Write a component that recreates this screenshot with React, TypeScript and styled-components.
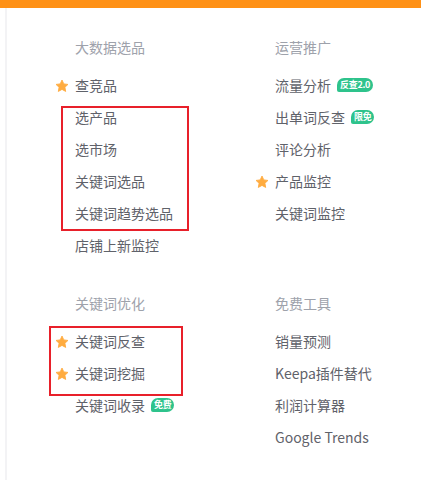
import React from 'react';
import styled, {createGlobalStyle} from 'styled-components';

const GlobalStyle = createGlobalStyle`
    html, body {
        margin: 0;
        padding: 0;
        background: #ffffff;
        font-family: "Noto Sans CJK SC", "Noto Sans", sans-serif;
    }
`;

const Page = styled.div`
    width: 421px;
    height: 480px;
    display: flex;
    flex-direction: column;
    overflow: hidden;
`;

const TopBar = styled.div`
    height: 8px;
    background: #ff9116;
    flex-shrink: 0;
`;

const Panel = styled.div`
    flex: 1;
    margin-left: 5px;
    border-left: 2px solid #f3f3f5;
    padding: 24px 0 0 48px;
`;

const Grid = styled.div`
    display: grid;
    grid-template-columns: 200px 200px;
    row-gap: 26px;
`;

const Section = styled.div`
    display: flex;
    flex-direction: column;
`;

const Title = styled.div`
    height: 32px;
    line-height: 30px;
    margin: 0 0 6px 20px;
    font-size: 14px;
    color: #9ea2ab;
`;

const Row = styled.div`
    display: grid;
    grid-template-columns: 20px auto;
    align-items: center;
    height: 32px;
`;

const StarCell = styled.span`
    display: flex;
    align-items: center;
`;

const Label = styled.span`
    display: flex;
    align-items: center;
    font-size: 14px;
    line-height: 30px;
    padding-bottom: 2px;
    color: #5f626a;
    white-space: nowrap;
`;

const Badge = styled.span`
    margin-left: 6px;
    height: 14px;
    padding: 0 3px;
    display: inline-flex;
    align-items: center;
    background: #2ec38c;
    color: #ffffff;
    font-size: 9px;
    font-weight: 700;
    line-height: 14px;
    border-radius: 7px 7px 7px 2px;
    letter-spacing: -0.3px;
`;

// red annotation frame drawn over a run of rows
const Highlight = styled.div<{$top: number; $left: number; $width: number; $bottom: number}>`
    position: relative;

    &::after {
        content: '';
        position: absolute;
        top: ${p => p.$top}px;
        left: ${p => p.$left}px;
        width: ${p => p.$width}px;
        bottom: ${p => p.$bottom}px;
        border: 2px solid #e8202a;
        pointer-events: none;
    }
`;

const Star = () => (
    <svg width="14" height="14" viewBox="0 0 24 24">
        <path
            d="M12 1.8l3.1 6.6 7.1.9-5.2 4.9 1.3 7.1L12 17.8l-6.3 3.5 1.3-7.1L1.8 9.3l7.1-.9z"
            fill="#ffac40"
            stroke="#ffac40"
            strokeWidth="1.5"
            strokeLinejoin="round"
        />
    </svg>
);

type ItemProps = {text: string; star?: boolean; badge?: string};

const Item = ({text, star, badge}: ItemProps) => (
    <Row>
        <StarCell>{star && <Star />}</StarCell>
        <Label>
            {text}
            {badge && <Badge>{badge}</Badge>}
        </Label>
    </Row>
);

const App = () => {
    return (
        <Page>
            <GlobalStyle />
            <TopBar />
            <Panel>
                <Grid>
                    <Section>
                        <Title>大数据选品</Title>
                        <Item text="查竞品" star />
                        <Highlight $top={4} $left={6} $width={124} $bottom={-1}>
                            <Item text="选产品" />
                            <Item text="选市场" />
                            <Item text="关键词选品" />
                            <Item text="关键词趋势选品" />
                        </Highlight>
                        <Item text="店铺上新监控" />
                    </Section>
                    <Section>
                        <Title>运营推广</Title>
                        <Item text="流量分析" badge="反查2.0" />
                        <Item text="出单词反查" badge="限免" />
                        <Item text="评论分析" />
                        <Item text="产品监控" star />
                        <Item text="关键词监控" />
                    </Section>
                    <Section>
                        <Title>关键词优化</Title>
                        <Highlight $top={0} $left={-6} $width={130} $bottom={-6}>
                            <Item text="关键词反查" star />
                            <Item text="关键词挖掘" star />
                        </Highlight>
                        <Item text="关键词收录" badge="免费" />
                    </Section>
                    <Section>
                        <Title>免费工具</Title>
                        <Item text="销量预测" />
                        <Item text="Keepa插件替代" />
                        <Item text="利润计算器" />
                        <Item text="Google Trends" />
                    </Section>
                </Grid>
            </Panel>
        </Page>
    );
};

export default App;
